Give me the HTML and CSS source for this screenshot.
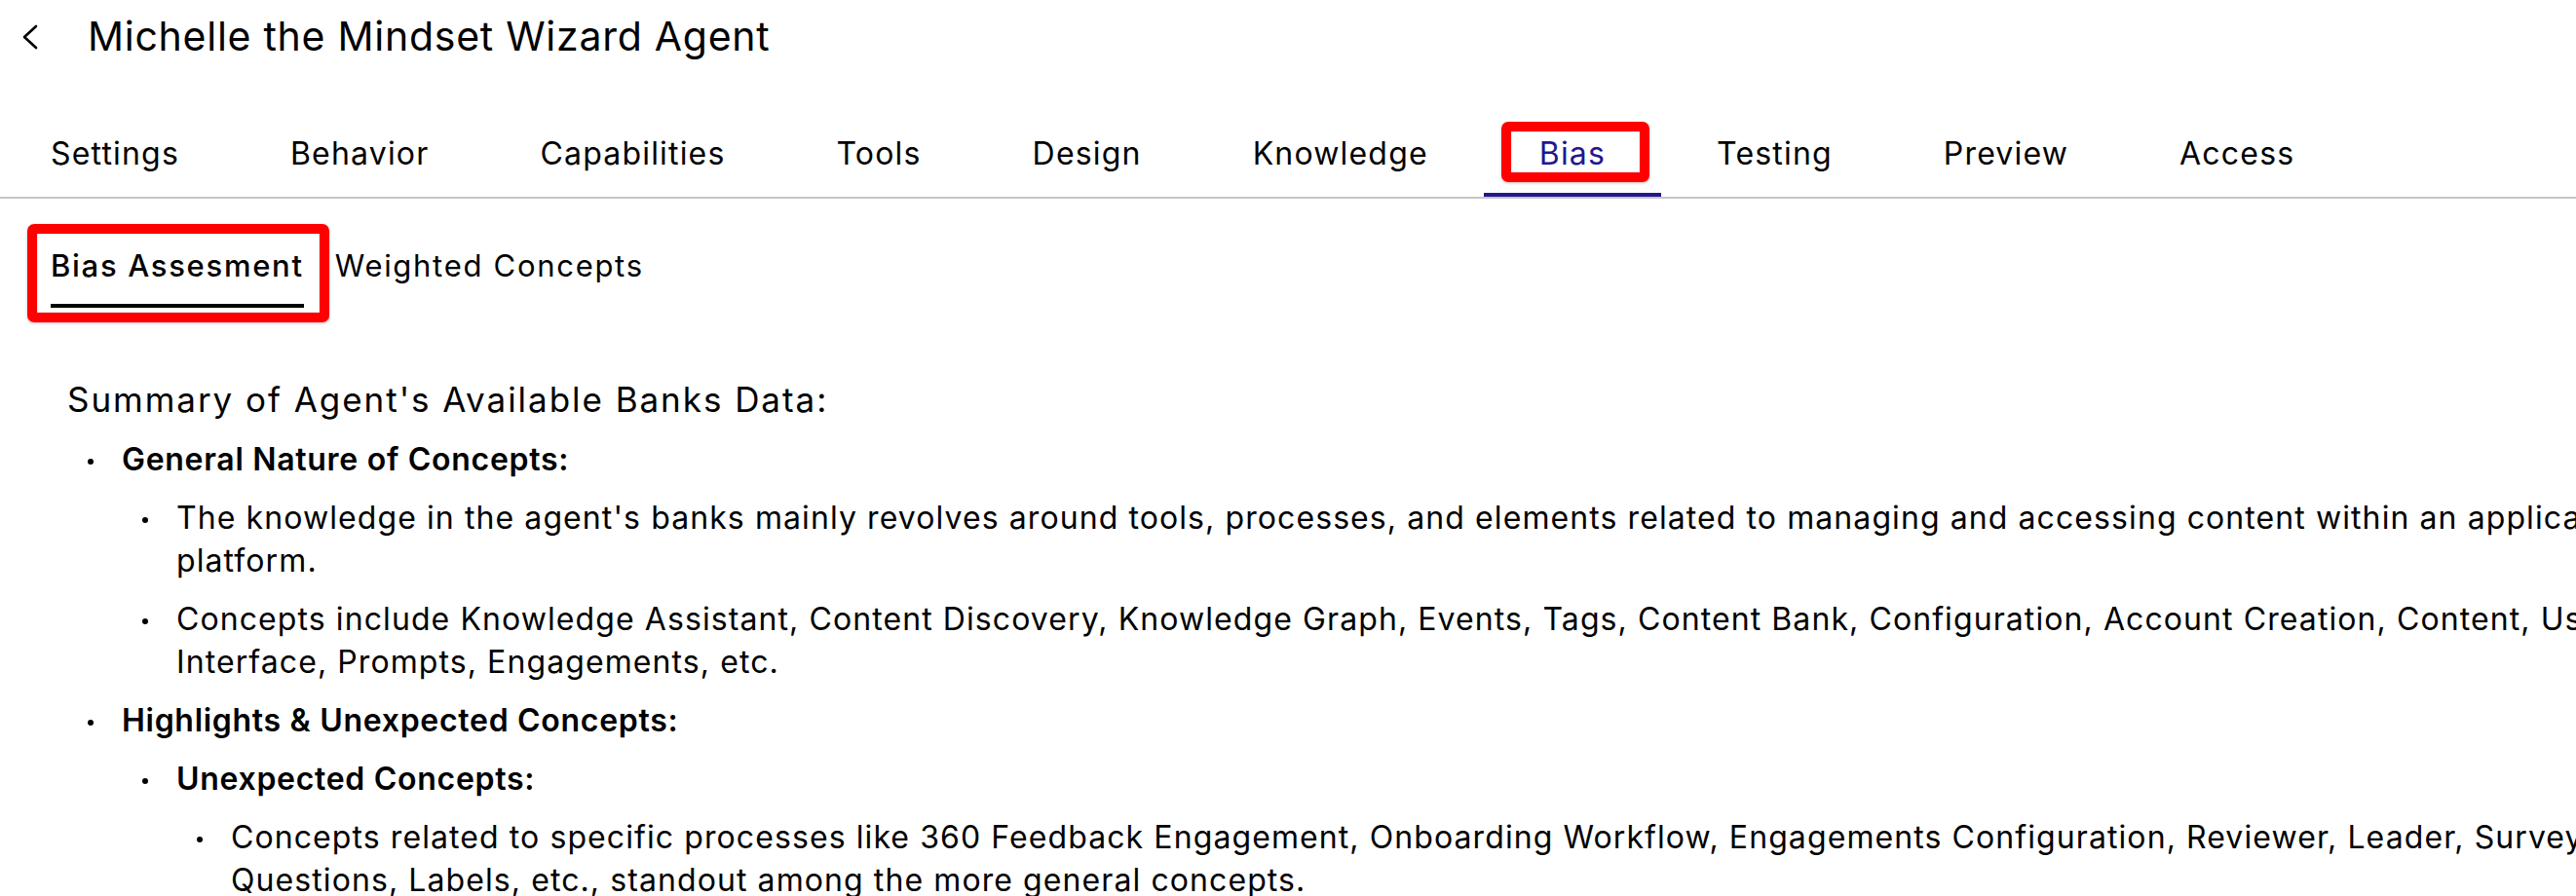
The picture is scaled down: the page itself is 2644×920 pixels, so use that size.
FILE: index.html
```html
<!DOCTYPE html>
<html lang="en">
<head>
<meta charset="utf-8">
<title>Michelle the Mindset Wizard Agent</title>
<link rel="stylesheet" href="styles.css">
</head>
<body>
<div class="page">
  <header class="header">
    <button class="back" aria-label="Back">
      <svg width="18" height="26" viewBox="0 0 18 26"><polyline points="15,2 3,13 15,24" fill="none" stroke="#000" stroke-width="2.6" stroke-linecap="round" stroke-linejoin="round"/></svg>
    </button>
    <h1 class="title">Michelle the Mindset Wizard Agent</h1>
  </header>

  <nav class="tabs">
    <a class="tab">Settings</a>
    <a class="tab">Behavior</a>
    <a class="tab">Capabilities</a>
    <a class="tab">Tools</a>
    <a class="tab">Design</a>
    <a class="tab">Knowledge</a>
    <a class="tab active">Bias<span class="callout callout-tab"></span></a>
    <a class="tab">Testing</a>
    <a class="tab">Preview</a>
    <a class="tab">Access</a>
  </nav>

  <div class="subtabs">
    <a class="subtab active">Bias Assesment<span class="callout callout-sub"></span></a>
    <a class="subtab">Weighted Concepts</a>
  </div>

  <section class="content">
    <h2 class="heading">Summary of Agent's Available Banks Data:</h2>
    <ul class="list l1">
      <li><strong>General Nature of Concepts:</strong>
        <ul class="list l2">
          <li>The knowledge in the agent's banks mainly revolves around tools, processes, and elements related to managing and accessing content within an application platform.</li>
          <li>Concepts include Knowledge Assistant, Content Discovery, Knowledge Graph, Events, Tags, Content Bank, Configuration, Account Creation, Content, User Interface, Prompts, Engagements, etc.</li>
        </ul>
      </li>
      <li><strong>Highlights &amp; Unexpected Concepts:</strong>
        <ul class="list l2">
          <li><strong>Unexpected Concepts:</strong>
            <ul class="list l3">
              <li>Concepts related to specific processes like 360 Feedback Engagement, Onboarding Workflow, Engagements Configuration, Reviewer, Leader, Survey Questions, Labels, etc., standout among the more general concepts.</li>
            </ul>
          </li>
        </ul>
      </li>
    </ul>
  </section>
</div>
</body>
</html>
```

FILE: styles.css
```css
html, body {
  margin: 0;
  padding: 0;
  background: #ffffff;
  overflow: hidden;
}

body {
  font-family: "Inter", "Noto Sans", "DejaVu Sans", sans-serif;
  color: #000;
}

.page {
  width: 2785px;
}

.header {
  display: flex;
  align-items: center;
  height: 63px;
  padding: 6px 0 0 22px;
}

.back {
  display: flex;
  align-items: center;
  background: none;
  border: 0;
  padding: 0;
  margin: 0 50px 0 0;
  width: 18px;
  height: 26px;
}

.title {
  margin: 0;
  font-size: 41px;
  font-weight: 400;
  line-height: 63px;
  letter-spacing: 0.018em;
}

.tabs {
  display: flex;
  margin-top: 65px;
  margin-left: -5px;
  border-bottom: 2px solid #c6c6c6;
}

.tab {
  position: relative;
  padding: 0 57px 16px;
  font-size: 32px;
  line-height: 48px;
  border-bottom: 4px solid transparent;
  letter-spacing: 0.037em;
  color: #000;
}

.tab.active {
  color: #24168f;
  border-bottom-color: #24168f;
}

.callout {
  position: absolute;
  box-sizing: border-box;
  border: 10px solid #ff0000;
  border-radius: 7px;
  box-shadow: 0 1px 3px rgba(0, 0, 0, 0.25), inset 0 0 2px rgba(0, 0, 0, 0.25);
}

.callout-tab {
  left: 18px;
  right: 12px;
  top: -9px;
  height: 62px;
}

.subtabs {
  display: flex;
  gap: 32px;
  margin-top: 46px;
  padding-left: 52px;
}

.subtab {
  position: relative;
  font-size: 31px;
  line-height: 45px;
  padding-bottom: 17px;
  border-bottom: 4px solid transparent;
  letter-spacing: 0.055em;
}

.subtab.active {
  font-weight: 500;
  border-bottom-color: #000;
}

.callout-sub {
  left: -24px;
  right: -26px;
  top: -20px;
  bottom: -19px;
}

.content {
  margin-top: 70px;
  padding-left: 69px;
}

.heading {
  margin: 0;
  font-size: 35px;
  font-weight: 400;
  line-height: 48px;
  letter-spacing: 0.056em;
}

.list {
  list-style: none;
  margin: 0;
  padding: 0 0 0 56px;
  font-size: 32px;
  line-height: 44px;
  letter-spacing: 0.034em;
}

.l1 {
  margin-top: 16px;
}

.list li {
  margin-top: 16px;
}

.list li:first-child {
  margin-top: 0;
}

.list .list {
  margin-top: 16px;
}

.list li::before {
  content: "";
  display: inline-block;
  width: 6px;
  height: 6px;
  border-radius: 50%;
  background: #000;
  margin-left: -35px;
  margin-right: 29px;
  vertical-align: middle;
}

.list strong {
  font-weight: 600;
  letter-spacing: 0.022em;
}
```
